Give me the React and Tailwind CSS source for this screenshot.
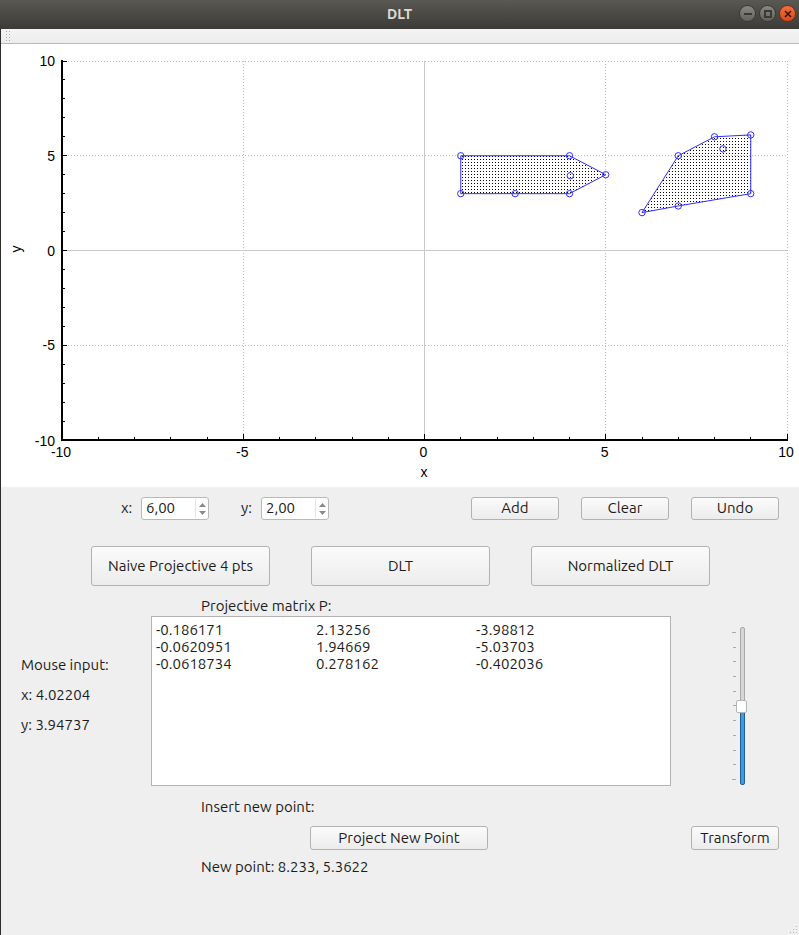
import React from 'react'

const X0 = 424.5
const Y0 = 250.5
const SX = 36.25
const SY = 18.95
const px = x => X0 + x * SX
const py = y => Y0 - y * SY
const crisp = v => Math.floor(v) + 0.5

const POLY_A = [[1, 5], [4, 5], [5, 4], [4, 3], [2.5, 3], [1, 3]]
const POLY_B = [[6, 2], [7, 5], [8, 6], [9, 6.1], [9, 3], [7, 2.35]]
const EXTRA = [[4.02204, 3.94737], [8.233, 5.3622]]
const TICKS = Array.from({ length: 21 }, (_, i) => i - 10)
const LABELS = [-10, -5, 0, 5, 10]

const UI = "font-['Ubuntu','Noto_Sans',sans-serif]"

function Plot() {
  const pts = p => p.map(([x, y]) => `${px(x)},${py(y)}`).join(' ')
  return (
    <svg width="798" height="443" viewBox="1 44 798 443" className="block">
      <defs>
        <pattern id="dots" width="3" height="3" patternUnits="userSpaceOnUse">
          <rect width="1" height="1" fill="#000" />
        </pattern>
      </defs>

      {/* grid */}
      {[-5, 5, 10].map(v => (
        <line key={'gx' + v} x1={crisp(px(v))} x2={crisp(px(v))} y1={py(10)} y2={py(-10)} stroke="#bdbdbd" strokeDasharray="1 2" />
      ))}
      {[-5, 5, 10].map(v => (
        <line key={'gy' + v} x1={px(-10)} x2={px(10)} y1={crisp(py(v))} y2={crisp(py(v))} stroke="#bdbdbd" strokeDasharray="1 2" />
      ))}
      <line x1={424.5} x2={424.5} y1={py(10)} y2={py(-10)} stroke="#c8c8c8" />
      <line x1={px(-10)} x2={px(10)} y1={250.5} y2={250.5} stroke="#c8c8c8" />

      {/* shapes */}
      <polygon points={pts(POLY_A)} fill="url(#dots)" stroke="#2f2fff" strokeWidth="1" />
      <polygon points={pts(POLY_B)} fill="url(#dots)" stroke="#2f2fff" strokeWidth="1" />
      {[...POLY_A, ...POLY_B, ...EXTRA].map(([x, y], i) => (
        <circle key={i} cx={px(x)} cy={py(y)} r="3.2" fill="none" stroke="#2f2fff" strokeWidth="1" />
      ))}

      {/* axes */}
      <line x1={62} x2={62} y1={60} y2={441} stroke="#000" strokeWidth="2" />
      <line x1={61} x2={788} y1={440} y2={440} stroke="#000" strokeWidth="2" />
      {TICKS.map(v => (
        <line key={'tx' + v} x1={crisp(px(v))} x2={crisp(px(v))} y1={440} y2={v % 5 === 0 ? 434 : 437} stroke="#000" />
      ))}
      {TICKS.map(v => (
        <line key={'ty' + v} x1={62} x2={v % 5 === 0 ? 67 : 65} y1={crisp(py(v))} y2={crisp(py(v))} stroke="#000" />
      ))}

      {/* labels */}
      <g fontFamily="'Liberation Sans', Arial, sans-serif" fontSize="14" fill="#000">
        {LABELS.map(v => (
          <text key={'lx' + v} x={px(v) - 1} y={457} textAnchor="middle">{v}</text>
        ))}
        {LABELS.map(v => (
          <text key={'ly' + v} x={55} y={py(v) + 5 + (v === -10 ? 1 : 0)} textAnchor="end">{v}</text>
        ))}
        <text x={424} y={477} textAnchor="middle">x</text>
        <text x={21} y={249} textAnchor="middle" transform="rotate(-90 21 249)">y</text>
      </g>
    </svg>
  )
}

function Btn({ className, children }) {
  return (
    <div className={`flex items-center justify-center rounded-[3px] border border-[#b2b2b2] bg-gradient-to-b from-[#fbfbfb] to-[#ececec] text-[#1c1c1c] ${className}`}>
      {children}
    </div>
  )
}

function Spin({ value }) {
  return (
    <div className="flex h-[23px] w-[68px] items-center rounded-[3px] border border-[#b9b9b9] bg-white">
      <span className="flex-1 pl-[4px] text-[#1c1c1c]">{value}</span>
      <div className="flex h-[19px] w-[13px] flex-col items-center justify-center gap-[4px] border-l border-[#e3e3e3]">
        <svg width="7" height="4" viewBox="0 0 7 4"><path d="M3.5 0 L7 4 L0 4 Z" fill="#8a8a8a" /></svg>
        <svg width="7" height="4" viewBox="0 0 7 4"><path d="M0 0 L7 0 L3.5 4 Z" fill="#8a8a8a" /></svg>
      </div>
    </div>
  )
}

function Slider() {
  return (
    <div className="relative flex h-[158px] w-[16px]">
      <div className="flex h-full w-[4px] flex-col justify-between py-[5px]">
        {Array.from({ length: 11 }, (_, i) => (
          <div key={i} className={`h-px bg-[#a8a8a8] ${i === 0 || i === 10 ? 'w-[4px]' : 'ml-[1px] w-[3px]'}`} />
        ))}
      </div>
      <div className="ml-[4px] flex h-full w-[5px] flex-col">
        <div className="h-[76px] rounded-t-[2px] border border-[#a9a9a9] bg-[#d6d6d6]" />
        <div className="flex-1 rounded-b-[2px] border border-[#245f94] bg-[#3f9be2]" />
      </div>
      <div className="absolute left-[4px] top-[73px] h-[13px] w-[11px] rounded-[2px] border border-[#b5b5b5] bg-white" />
    </div>
  )
}

export default function App() {
  return (
    <div className={`flex h-[935px] w-[799px] flex-col overflow-hidden bg-[#efefef] text-[15px] ${UI}`}>
      {/* title bar */}
      <div className="relative flex h-[29px] shrink-0 items-center justify-center bg-gradient-to-b from-[#5a5852] to-[#3c3b37]">
        <span className="text-[14px] font-bold text-[#dfdbd2]">DLT</span>
        <div className="absolute right-[3px] top-[5px] flex gap-[3px]">
          <div className="flex h-[17px] w-[17px] items-center justify-center rounded-full border border-[#3a3935] bg-gradient-to-b from-[#8a8883] to-[#64625d]">
            <div className="h-[2px] w-[8px] bg-[#3b3a36]" />
          </div>
          <div className="flex h-[17px] w-[17px] items-center justify-center rounded-full border border-[#3a3935] bg-gradient-to-b from-[#8a8883] to-[#64625d]">
            <div className="h-[8px] w-[8px] border-2 border-[#3b3a36]" />
          </div>
          <div className="flex h-[17px] w-[17px] items-center justify-center rounded-full border border-[#7a2d10] bg-gradient-to-b from-[#f0703f] to-[#d8491b]">
            <svg width="8" height="8" viewBox="0 0 8 8"><path d="M1 1 L7 7 M7 1 L1 7" stroke="#3a1508" strokeWidth="1.6" /></svg>
          </div>
        </div>
      </div>

      <div className="flex flex-1 flex-col border-l border-[#2d2c29]">
        {/* toolbar strip */}
        <div className="flex h-[15px] shrink-0 items-center border-b border-[#b9b9b9] bg-gradient-to-b from-[#f4f4f4] to-[#ececec] pl-[5px]">
          <div className="grid grid-cols-2 gap-x-[2px] gap-y-[2px]">
            {Array.from({ length: 8 }, (_, i) => <div key={i} className="h-px w-px bg-[#b0b0b0]" />)}
          </div>
        </div>

        {/* plot */}
        <div className="h-[443px] shrink-0 bg-white">
          <Plot />
        </div>

        {/* controls */}
        <div className="flex flex-1 flex-col text-[#1c1c1c]">
          <div className="mt-[10px] flex h-[23px] items-center">
            <span className="ml-[120px] w-[20px]">x:</span>
            <Spin value="6,00" />
            <span className="ml-[32px] w-[20px]">y:</span>
            <Spin value="2,00" />
            <Btn className="ml-[142px] h-[23px] w-[88px]">Add</Btn>
            <Btn className="ml-[22px] h-[23px] w-[88px]">Clear</Btn>
            <Btn className="ml-[22px] h-[23px] w-[88px]">Undo</Btn>
          </div>

          <div className="mt-[26px] flex h-[40px] gap-[41px] pl-[90px]">
            <Btn className="h-[40px] w-[179px]">Naive Projective 4 pts</Btn>
            <Btn className="h-[40px] w-[179px]">DLT</Btn>
            <Btn className="h-[40px] w-[179px]">Normalized DLT</Btn>
          </div>

          <div className="mt-[10px] flex h-[190px]">
            <div className="flex w-[150px] flex-col gap-[10px] pl-[20px] pt-[59px] leading-[20px]">
              <span>Mouse input:</span>
              <span>x: 4.02204</span>
              <span>y: 3.94737</span>
            </div>
            <div className="flex w-[520px] flex-col">
              <div className="h-[20px] pl-[50px] leading-[20px]">Projective matrix P:</div>
              <div className="grid h-[170px] grid-cols-[160px_160px_1fr] content-start border border-[#b4b4b4] bg-white pl-[4px] pt-[4px] leading-[17px]">
                <span>-0.186171</span><span>2.13256</span><span>-3.98812</span>
                <span>-0.0620951</span><span>1.94669</span><span>-5.03703</span>
                <span>-0.0618734</span><span>0.278162</span><span>-0.402036</span>
              </div>
            </div>
            <div className="ml-[61px] pt-[31px]">
              <Slider />
            </div>
          </div>

          <div className="ml-[200px] mt-[11px] h-[20px] leading-[20px]">Insert new point:</div>
          <div className="mt-[9px] flex h-[24px]">
            <Btn className="ml-[309px] h-[24px] w-[178px]">Project New Point</Btn>
            <Btn className="ml-[203px] h-[24px] w-[88px]">Transform</Btn>
          </div>
          <div className="ml-[200px] mt-[7px] h-[20px] leading-[20px]">New point: 8.233, 5.3622</div>

          <div className="mt-auto mb-[2px] mr-[2px] flex justify-end">
            <div className="grid grid-cols-3 gap-[2px]">
              {[0, 0, 1, 0, 1, 1, 1, 1, 1].map((on, i) => (
                <div key={i} className={`h-px w-px ${on ? 'bg-[#bdbdbd]' : 'bg-transparent'}`} />
              ))}
            </div>
          </div>
        </div>
      </div>
    </div>
  )
}
